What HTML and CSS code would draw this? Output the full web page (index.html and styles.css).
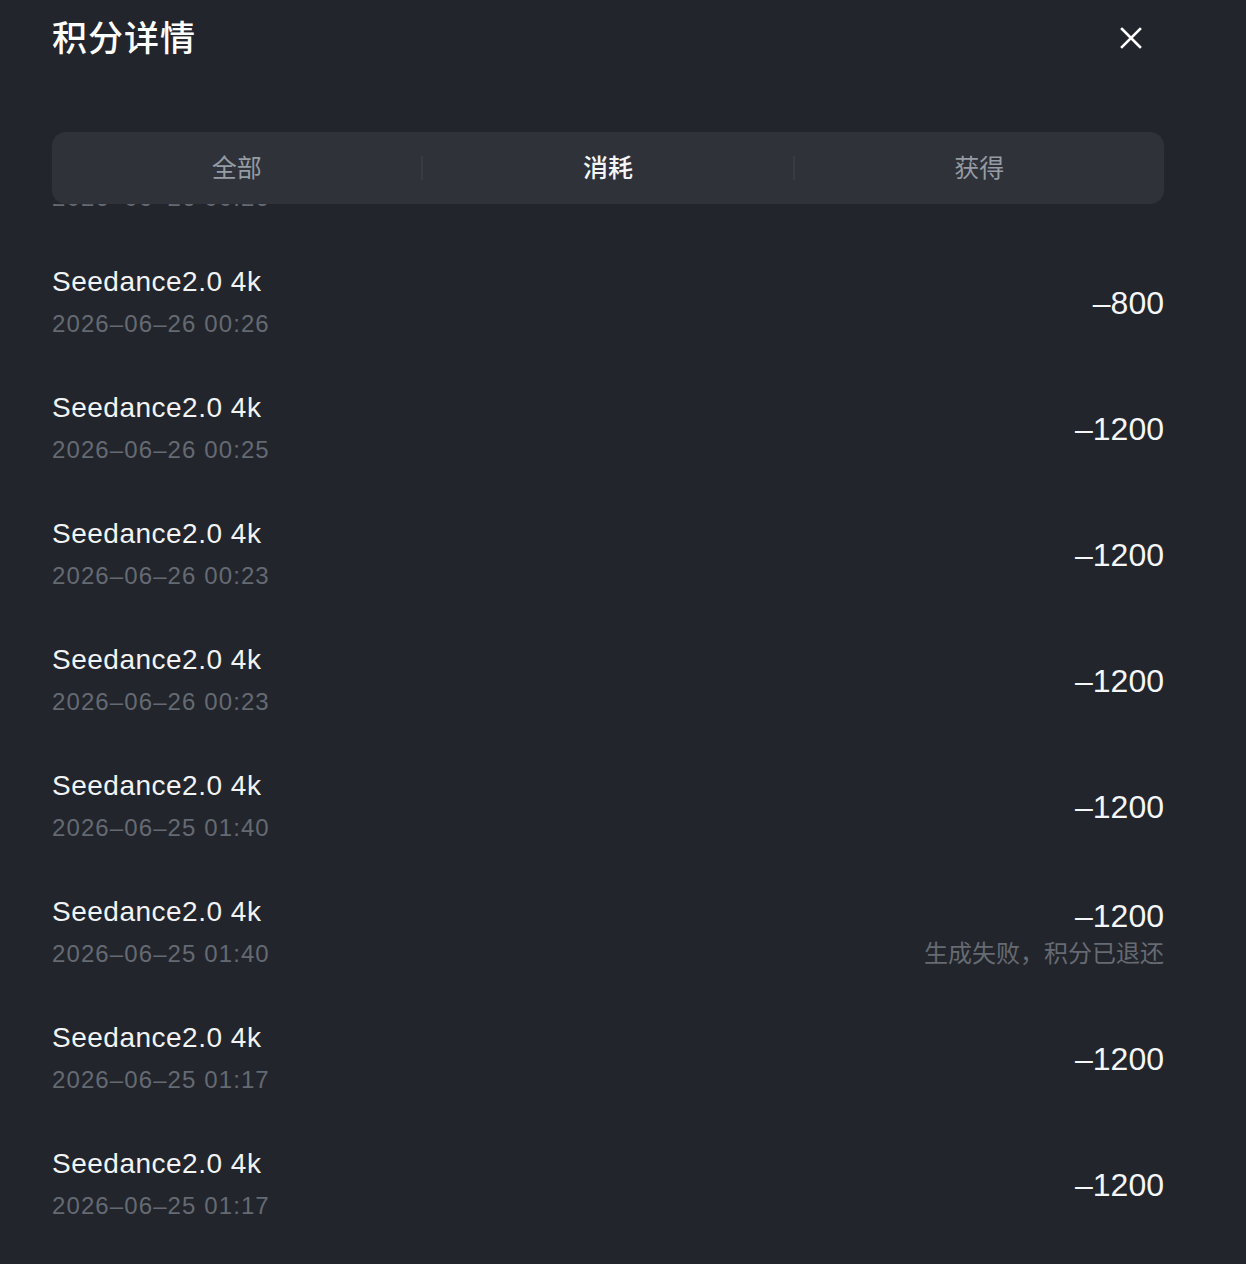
FILE: index.html
```html
<!DOCTYPE html>
<html lang="zh-CN">
<head>
    <meta charset="UTF-8">
    <meta name="viewport" content="width=device-width, initial-scale=1.0">
    <title>积分详情</title>
    <link rel="stylesheet" href="styles.css">
</head>
<body>
    <div class="panel">
        <div class="header">
            <h1>积分详情</h1>
            <button class="close" aria-label="关闭">
                <svg width="22" height="22" viewBox="0 0 22 22">
                    <path d="M2 2 L20 20 M20 2 L2 20" stroke="#ffffff" stroke-width="2.6" stroke-linecap="square" fill="none"/>
                </svg>
            </button>
        </div>

        <div class="tabs">
            <div class="tab">全部</div>
            <span class="sep"></span>
            <div class="tab active">消耗</div>
            <span class="sep"></span>
            <div class="tab">获得</div>
        </div>

        <div class="list">
            <div class="rows">
                <div class="row">
                    <div class="info">
                        <div class="name">Seedance2.0 4k</div>
                        <div class="date">2026–06–26 00:26</div>
                    </div>
                    <div class="points"><div class="amount">–800</div></div>
                </div>
                <div class="row">
                    <div class="info">
                        <div class="name">Seedance2.0 4k</div>
                        <div class="date">2026–06–26 00:26</div>
                    </div>
                    <div class="points"><div class="amount">–800</div></div>
                </div>
                <div class="row">
                    <div class="info">
                        <div class="name">Seedance2.0 4k</div>
                        <div class="date">2026–06–26 00:25</div>
                    </div>
                    <div class="points"><div class="amount">–1200</div></div>
                </div>
                <div class="row">
                    <div class="info">
                        <div class="name">Seedance2.0 4k</div>
                        <div class="date">2026–06–26 00:23</div>
                    </div>
                    <div class="points"><div class="amount">–1200</div></div>
                </div>
                <div class="row">
                    <div class="info">
                        <div class="name">Seedance2.0 4k</div>
                        <div class="date">2026–06–26 00:23</div>
                    </div>
                    <div class="points"><div class="amount">–1200</div></div>
                </div>
                <div class="row">
                    <div class="info">
                        <div class="name">Seedance2.0 4k</div>
                        <div class="date">2026–06–25 01:40</div>
                    </div>
                    <div class="points"><div class="amount">–1200</div></div>
                </div>
                <div class="row">
                    <div class="info">
                        <div class="name">Seedance2.0 4k</div>
                        <div class="date">2026–06–25 01:40</div>
                    </div>
                    <div class="points">
                        <div class="amount">–1200</div>
                        <div class="note">生成失败，积分已退还</div>
                    </div>
                </div>
                <div class="row">
                    <div class="info">
                        <div class="name">Seedance2.0 4k</div>
                        <div class="date">2026–06–25 01:17</div>
                    </div>
                    <div class="points"><div class="amount">–1200</div></div>
                </div>
                <div class="row">
                    <div class="info">
                        <div class="name">Seedance2.0 4k</div>
                        <div class="date">2026–06–25 01:17</div>
                    </div>
                    <div class="points"><div class="amount">–1200</div></div>
                </div>
                <div class="row">
                    <div class="info">
                        <div class="name">Seedance2.0 4k</div>
                        <div class="date">2026–06–25 01:12</div>
                    </div>
                    <div class="points"><div class="amount">–1200</div></div>
                </div>
            </div>
        </div>
    </div>
</body>
</html>
```

FILE: styles.css
```css
html, body {
    margin: 0;
    height: 100%;
    background: #22252c;
}
body {
    font-family: "Liberation Sans", "Noto Sans CJK SC", sans-serif;
    color: #f2f3f5;
    overflow: hidden;
}
.panel {
    display: flex;
    flex-direction: column;
    height: 1264px;
    padding: 0 82px 0 52px;
}
.header {
    display: flex;
    align-items: center;
    justify-content: space-between;
    height: 76px;
    flex: none;
}
.header h1 {
    margin: 0;
    font-family: "Noto Sans CJK SC", sans-serif;
    font-size: 35px;
    line-height: 71px;
    font-weight: 500;
    color: #ffffff;
    letter-spacing: 1px;
    padding-bottom: 5px;
}
.close {
    width: 40px;
    height: 40px;
    margin: 0 13px 0 0;
    padding: 0;
    border: none;
    background: none;
    display: flex;
    align-items: center;
    justify-content: center;
    cursor: pointer;
}
.tabs {
    flex: none;
    display: flex;
    align-items: center;
    height: 72px;
    margin-top: 56px;
    background: #2f3239;
    border-radius: 14px;
    position: relative;
    z-index: 1;
}
.tab {
    flex: 1;
    text-align: center;
    font-family: "Noto Sans CJK SC", sans-serif;
    font-size: 25px;
    line-height: 36px;
    padding-bottom: 4px;
    color: #959ca4;
}
.tab.active {
    color: #f4f5f7;
    font-weight: 500;
}
.sep {
    width: 2px;
    height: 24px;
    background: #383b43;
}
.list {
    flex: 1;
    overflow: hidden;
}
.rows {
    margin-top: -90px;
}
.row {
    display: flex;
    align-items: center;
    justify-content: space-between;
    height: 126px;
}
.name {
    font-size: 28px;
    line-height: 42px;
    letter-spacing: 0.5px;
    color: #f2f3f5;
}
.date {
    font-size: 24px;
    line-height: 42px;
    letter-spacing: 1.1px;
    color: #656a72;
}
.points {
    text-align: right;
}
.amount {
    font-size: 32px;
    line-height: 38px;
    color: #f5f6f7;
}
.note {
    font-family: "Noto Sans CJK SC", sans-serif;
    font-size: 24px;
    line-height: 34px;
    color: #666b73;
}
```
